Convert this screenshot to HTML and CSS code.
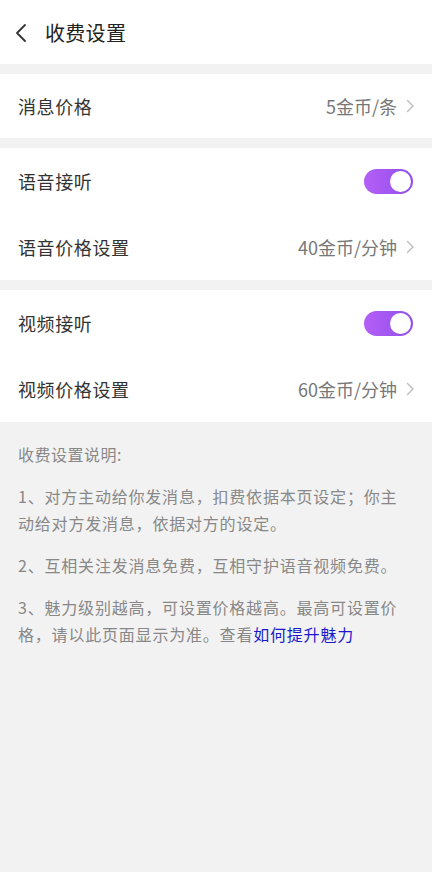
FILE: index.html
```html
<!DOCTYPE html>
<html lang="zh">
<head>
<meta charset="utf-8">
<link rel="stylesheet" href="styles.css">
</head>
<body>
<div class="page">
  <header class="topbar">
    <svg class="back" width="14" height="20" viewBox="0 0 14 20"><path d="M11 2 L3 10 L11 18" fill="none" stroke="#333" stroke-width="1.8" stroke-linecap="round" stroke-linejoin="round"/></svg>
    <span class="title">收费设置</span>
  </header>

  <section class="group">
    <div class="row first">
      <span class="label">消息价格</span>
      <span class="value">5金币/条<svg class="chev" width="9" height="14" viewBox="0 0 9 14"><path d="M1.5 1.5 L7 7 L1.5 12.5" fill="none" stroke="#bbb" stroke-width="1.4" stroke-linecap="round" stroke-linejoin="round"/></svg></span>
    </div>
  </section>

  <section class="group">
    <div class="row">
      <span class="label">语音接听</span>
      <span class="switch"><span class="knob"></span></span>
    </div>
    <div class="row">
      <span class="label">语音价格设置</span>
      <span class="value">40金币/分钟<svg class="chev" width="9" height="14" viewBox="0 0 9 14"><path d="M1.5 1.5 L7 7 L1.5 12.5" fill="none" stroke="#bbb" stroke-width="1.4" stroke-linecap="round" stroke-linejoin="round"/></svg></span>
    </div>
  </section>

  <section class="group">
    <div class="row">
      <span class="label">视频接听</span>
      <span class="switch"><span class="knob"></span></span>
    </div>
    <div class="row">
      <span class="label">视频价格设置</span>
      <span class="value">60金币/分钟<svg class="chev" width="9" height="14" viewBox="0 0 9 14"><path d="M1.5 1.5 L7 7 L1.5 12.5" fill="none" stroke="#bbb" stroke-width="1.4" stroke-linecap="round" stroke-linejoin="round"/></svg></span>
    </div>
  </section>

  <div class="notes">
    <p class="notes-title">收费设置说明:</p>
    <p>1、对方主动给你发消息，扣费依据本页设定；你主动给对方发消息，依据对方的设定。</p>
    <p>2、互相关注发消息免费，互相守护语音视频免费。</p>
    <p>3、魅力级别越高，可设置价格越高。最高可设置价格，请以此页面显示为准。查看<span class="link">如何提升魅力</span></p>
  </div>
</div>
</body>
</html>
```

FILE: styles.css
```css
* { box-sizing: border-box; }
html, body { margin: 0; padding: 0; }
body {
  background: #f2f2f2;
  font-family: "Noto Sans CJK SC", "Noto Sans", sans-serif;
  color: #333;
}
.page { width: 432px; min-height: 872px; background: #f2f2f2; }
.topbar {
  height: 64px;
  background: #fff;
  display: flex;
  align-items: center;
  padding-left: 14px;
}
.back { margin-right: 17px; margin-top: 1px; }
.title { font-size: 20px; color: #222; letter-spacing: 0.3px; }
.group { background: #fff; margin-top: 10px; }
.row {
  height: 66px;
  display: flex;
  align-items: center;
  justify-content: space-between;
  padding: 0 18px;
}
.row.first { height: 64px; }
.label { font-size: 18px; letter-spacing: 0.6px; color: #333; }
.value {
  display: flex;
  align-items: center;
  font-size: 18px;
  color: #777;
}
.chev { margin-left: 9px; margin-right: -1px; }
.switch {
  width: 49px;
  height: 25px;
  border-radius: 13px;
  background: linear-gradient(90deg, #b45ff7, #904fea);
  position: relative;
  margin-right: 1px;
}
.knob {
  position: absolute;
  right: 2px;
  top: 2px;
  width: 21px;
  height: 21px;
  border-radius: 50%;
  background: #fff;
}
.notes { padding: 19px 18px 0 18px; }
.notes p {
  margin: 0 0 15px 0;
  font-size: 16px;
  line-height: 27px;
  letter-spacing: 0.8px;
  color: #888;
}
.notes p.notes-title { margin-bottom: 15px; letter-spacing: 0.5px; }
.link { color: #1a1acc; }
```
